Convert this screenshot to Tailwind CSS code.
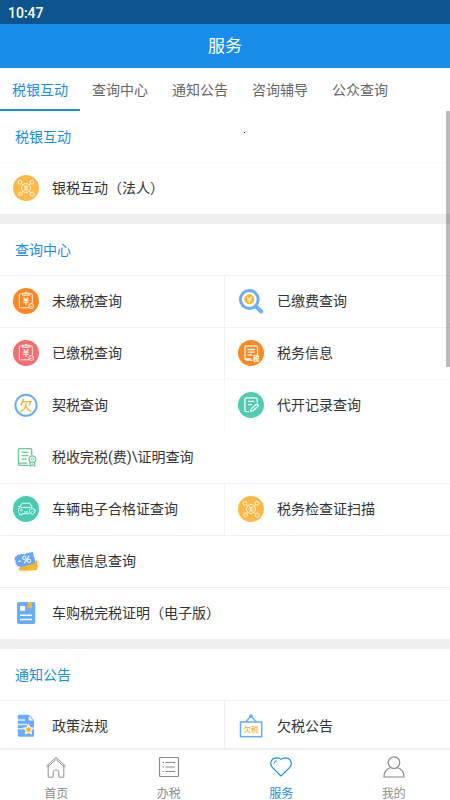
<!DOCTYPE html>
<html lang="zh-CN">
<head>
<meta charset="utf-8">
<meta name="viewport" content="width=device-width, initial-scale=1">
<title>服务</title>
<script src="https://cdn.jsdelivr.net/npm/@tailwindcss/browser@4"></script>
</head>
<body class="w-[450px] h-[800px] overflow-hidden bg-white font-['Roboto','Noto_Sans_CJK_SC',sans-serif] text-[14px] leading-[20px] text-[#333]">
<svg class="hidden">
  <symbol id="network" viewBox="0 0 26 26">
    <circle cx="13" cy="13" r="13" fill="#fdb948"/>
    <g fill="none" stroke="#fff3da" stroke-width="1">
      <circle cx="13" cy="13" r="4.5"/><circle cx="7" cy="7.2" r="1.9"/><circle cx="19" cy="7.2" r="1.9"/><circle cx="7.4" cy="18.9" r="1.7"/><circle cx="19.2" cy="19.2" r="2"/>
      <path d="M8.3 8.5l1.7 1.6M17.7 8.5L16 10.1M8.8 17.6l1.3-1.4M17.6 17.7L16 16.1M11 11.3h4M11.3 13h3.4M13 11v4.2M11.2 15h3.6"/>
    </g>
  </symbol>
  <symbol id="clip" viewBox="0 0 26 26">
    <g fill="none" stroke="#fff0e6" stroke-width="1">
      <path d="M16 19.8H7.4Q6.3 19.8 6.3 18.7V6.9Q6.3 5.8 7.4 5.8H18.2Q19.3 5.8 19.3 6.9V15"/>
      <path d="M9.5 7.3V5.2h2Q13 2.8 14.6 5.2h2v2.1z"/>
      <path d="M10.6 9.3L13 12l2.4-2.7M10.3 12.2h5.4M10.3 14.4h5.4M13 12v5" stroke-width="1.2"/>
      <circle cx="18.2" cy="18" r="2.4"/><path d="M17 18l1 .9 1.5-1.7" stroke-width=".8"/>
    </g>
  </symbol>
</svg>

<div class="flex h-full flex-col">
  <div class="h-6 shrink-0 bg-[#0e548d] pl-2 pt-[3px] text-[14px] font-medium text-white">10:47</div>
  <header class="flex h-11 shrink-0 items-center justify-center bg-[#188dea] text-[17px] text-white">服务</header>
  <nav class="flex h-[43px] shrink-0 text-[14px] text-[#666]">
    <a class="flex w-20 items-center justify-center border-b-2 border-[#188dea] pt-[2px] text-[#188dea]">税银互动</a>
    <a class="flex w-20 items-center justify-center">查询中心</a>
    <a class="flex w-20 items-center justify-center">通知公告</a>
    <a class="flex w-20 items-center justify-center">咨询辅导</a>
    <a class="flex w-20 items-center justify-center">公众查询</a>
  </nav>

  <main class="relative min-h-0 flex-1 overflow-hidden">
    <div class="absolute right-0 top-0 h-64 w-1 bg-black/27"></div>
    <div class="absolute left-[244px] top-[21px] size-px bg-black"></div>

    <section>
      <h2 class="flex h-[51px] items-center pl-[15px] text-[#188dea]">税银互动</h2>
      <div class="flex h-[52px] items-center gap-[13px] border-t border-[#fafafa] pb-[2px] pl-[13px]">
        <svg class="size-[26px]"><use href="#network"/></svg>银税互动（法人）
      </div>
    </section>
    <div class="h-[10px] bg-[#efefef]"></div>

    <section>
      <h2 class="flex h-[51px] items-center pl-[15px] text-[#188dea]">查询中心</h2>
      <div class="grid grid-cols-2">
        <div class="flex h-[52px] items-center gap-[13px] border-t border-r border-[#f1f1f1] pb-[2px] pl-[13px]">
          <svg class="size-[26px]" viewBox="0 0 26 26"><circle cx="13" cy="13" r="13" fill="#fd8721"/><use href="#clip"/></svg>未缴税查询
        </div>
        <div class="flex h-[52px] items-center gap-[13px] border-t border-[#f1f1f1] pb-[2px] pl-[13px]">
          <svg class="size-[26px]" viewBox="0 0 26 26" fill="none"><path d="M18 18.5l5.2 5" stroke="#6db0f8" stroke-width="4" stroke-linecap="round"/><circle cx="11.3" cy="11.5" r="8.9" stroke="#68adf7" stroke-width="3"/><circle cx="11.3" cy="11.2" r="5" fill="#f9b532"/><path d="M9.2 9l2.1 2.4L13.4 9M9 12h4.6M11.3 11v4" stroke="#fff3c8" stroke-width="1.2"/></svg>已缴费查询
        </div>
        <div class="flex h-[52px] items-center gap-[13px] border-t border-r border-[#f1f1f1] pb-[2px] pl-[13px]">
          <svg class="size-[26px]" viewBox="0 0 26 26"><circle cx="13" cy="13" r="13" fill="#f26c70"/><use href="#clip"/></svg>已缴税查询
        </div>
        <div class="flex h-[52px] items-center gap-[13px] border-t border-[#f1f1f1] pb-[2px] pl-[13px]">
          <svg class="size-[26px]" viewBox="0 0 26 26" fill="none" stroke="#fff4e8"><circle cx="13" cy="13" r="13" fill="#fd8721" stroke="none"/><path d="M14.5 20.2H9Q7 20.2 7 18.2V7Q7 6 8 6h10.5q1 0 1 1v8M7 18.8h6" stroke-width="1.3"/><path d="M9.5 9.5h7.5M9.5 12.2h7.5M9.5 15h4.5" stroke-width="1.3"/><text x="15" y="20.8" font-size="6.5" font-weight="700" fill="#fff" stroke="none" font-family="Noto Sans CJK SC">税</text></svg>税务信息
        </div>
        <div class="flex h-[52px] items-center gap-[13px] border-t border-r border-[#f8f8f8] pb-[2px] pl-[13px]">
          <svg class="size-[26px]" viewBox="0 0 26 26"><circle cx="13" cy="13.3" r="10.6" fill="none" stroke="#65abf8" stroke-width="1.9"/><text x="13" y="18" font-size="13" font-weight="500" text-anchor="middle" fill="#f8b02b" font-family="Noto Sans CJK SC">欠</text></svg>契税查询
        </div>
        <div class="flex h-[52px] items-center gap-[13px] border-t border-[#f8f8f8] pb-[2px] pl-[13px]">
          <svg class="size-[26px]" viewBox="0 0 26 26" fill="none" stroke="#f2fffb" stroke-width="1.3" stroke-linejoin="round"><circle cx="13" cy="13" r="13" fill="#4fccb1" stroke="none"/><path d="M11 19.7H8.2q-1.3 0-1.3-1.3V7.1q0-1.3 1.3-1.3h9.6q1.4 0 1.4 1.4v3.4M10 9.4h6.2M10 12.6h4"/><path d="M12.7 19.3l.5-2.6 5-4.2q1.1-.6 1.8.4t-.2 1.7l-4.7 4z"/></svg>代开记录查询
        </div>
        <div class="col-span-2 flex h-[52px] items-center gap-[13px] border-t border-[#fdfdfd] pb-[2px] pl-[13px]">
          <svg class="size-[26px]" viewBox="0 0 26 26" fill="none" stroke="#67c99a" stroke-width="1.3"><path d="M15.5 21.3H7q-1.5 0-1.5-1.4V5.8q0-1.2 1.2-1.2h10.8q1.2 0 1.2 1.2V11M5.6 19.2h8.5M8.5 8.3h7M8.5 11.7h7M8.5 15.1h5"/><circle cx="19.4" cy="15.2" r="3.3"/><circle cx="19.4" cy="15.2" r="1.2" stroke-width=".8"/><path d="M17.2 18v4l2.2-1.1 2.2 1.1v-4"/></svg>税收完税(费)\证明查询
        </div>
        <div class="flex h-[52px] items-center gap-[13px] border-t border-r border-[#f3f3f3] pb-[2px] pl-[13px]">
          <svg class="size-[26px]" viewBox="0 0 26 26" fill="none" stroke="#e4fff7"><circle cx="13" cy="13" r="13" fill="#48cbae" stroke="none"/><path d="M16.2 17.7H9v1H6.5v-1.4q-1-.5-1-1.7v-2q0-1.5 1.5-2L8.5 8q.3-.8 1.2-.8h6.6q.9 0 1.2.8l1.2 3.6M8 11.5h9.5M11 16h4M5 10.4l2 .5M19.5 10.4l-1.5.5"/><circle cx="8.5" cy="14" r=".8"/><path d="M19.3 12.6l2.8 1v1.7q0 2-2.8 3.2-2.8-1.2-2.8-3.2v-1.7z"/><path d="M18 15.5l1 .9 1.7-1.8" stroke-width=".8"/></svg>车辆电子合格证查询
        </div>
        <div class="flex h-[52px] items-center gap-[13px] border-t border-[#f3f3f3] pb-[2px] pl-[13px]">
          <svg class="size-[26px]"><use href="#network"/></svg>税务检查证扫描
        </div>
        <div class="col-span-2 flex h-[52px] items-center gap-[13px] border-t border-[#f0f0f0] pb-[2px] pl-[13px]">
          <svg class="size-[26px]" viewBox="0 0 26 26"><path d="M6 19.5l16-5.2 1.3-2.2q2.3 1.4.8 3.3.3 1.6.8 2.3l-1.1 4.3q-9 1.3-17.8.4z" fill="#f9b62d"/><path d="M4.3 6.8l6.4-.8q1.3 1.1 2.2-.6l7-1.3.7 2.6q-.8 1.3.6 2.2l1.3 4.5q-1.5.8-.9 2L7.4 19.2q-1-1.6-2.8-.6l-2.4-4.2q1.3-1.7-.7-2.4L2 8.8q1.9-.2 2.3-2z" fill="#63a6fa"/><path d="M5.2 13.5l2.8-.5M16.1 7.5l-4.8 8" stroke="#fff" stroke-width="1.2"/><g fill="none" stroke="#fff" stroke-width="1"><circle cx="11.2" cy="9.9" r="1.7"/><circle cx="16" cy="12.8" r="1.7"/></g></svg>优惠信息查询
        </div>
        <div class="col-span-2 flex h-[52px] items-center gap-[13px] border-t border-[#ededed] pb-[2px] pl-[13px]">
          <svg class="size-[26px]" viewBox="0 0 26 26"><rect x="4" y="2" width="18.3" height="22" rx="2" fill="#67adf9"/><path d="M14.5 2H19v7l-2.2-1.6L14.5 9z" fill="#f4b33a"/><path d="M7 6h5v4.8H7z" fill="#fff"/><path d="M7 15.3h12M7 19.5h12" stroke="#f4faff" stroke-width="1.5"/></svg>车购税完税证明（电子版）
        </div>
      </div>
    </section>
    <div class="h-[10px] bg-[#efefef]"></div>

    <section>
      <h2 class="flex h-[51px] items-center pl-[15px] text-[#188dea]">通知公告</h2>
      <div class="grid grid-cols-2">
        <div class="flex h-[52px] items-center gap-[13px] border-t border-r border-[#efefef] pb-[2px] pl-[13px]">
          <svg class="size-[26px]" viewBox="0 0 26 26"><path d="M6 1.8h10l5 5.4v15.3q0 1.3-1.3 1.3H6q-1.2 0-1.2-1.3V3q0-1.2 1.2-1.2z" fill="#69acfa"/><path d="M15.7 2.7v4.7h4.7z" fill="#e4f3ff"/><path d="M5 7h7M5 11.5h9.5M5 15.7h6" stroke="#dceeff" stroke-width="1.3"/><path d="M15.5 11.7l1.5 3 3.2.4-2.4 2.3.6 3.2-2.9-1.5-2.9 1.5.6-3.2-2.4-2.3 3.2-.4z" fill="#f9ac18" stroke="#fff6db" stroke-width="1.4" stroke-linejoin="round"/></svg>政策法规
        </div>
        <div class="flex h-[52px] items-center gap-[13px] border-t border-[#efefef] pb-[2px] pl-[13px]">
          <svg class="size-[26px]" viewBox="0 0 26 26"><path d="M7.5 9L13 3l5.5 6" fill="none" stroke="#69aff8" stroke-width="1.4"/><circle cx="13" cy="3.2" r="1.9" fill="#64b2f2"/><rect x="2.5" y="9" width="21.2" height="14.7" fill="#fff" stroke="#69aaf8" stroke-width="1.5"/><text x="13" y="19" font-size="7.3" font-weight="500" text-anchor="middle" fill="#f5ae2c" font-family="Noto Sans CJK SC">欠税</text></svg>欠税公告
        </div>
      </div>
    </section>
  </main>

  <footer class="grid h-[52px] shrink-0 grid-cols-4 border-t-2 border-[#f0f0f0] bg-white text-[12px] leading-[16px] text-[#8a8a8a]">
    <div class="flex flex-col items-center gap-2 pt-[6px]">
      <svg class="size-[22px]" viewBox="0 0 22 22" fill="none" stroke="currentColor"><path d="M1.3 10.1L11 1.3l9.7 8.8M3.2 9.2v12h5v-5.5q0-1.8 2.8-1.8t2.8 1.8v5.5h5v-12M2.6 11L11 3.4l8.4 7.6" stroke-width=".95"/></svg>首页
    </div>
    <div class="flex flex-col items-center gap-2 pt-[6px]">
      <svg class="size-[22px]" viewBox="0 0 22 22" fill="none" stroke="currentColor" stroke-width="1.2"><rect x="1.5" y="1.5" width="19" height="19" rx=".8"/><path d="M7.5 6.5h9.5M7.5 11h9.5M7.5 15.5h9.5M4.5 6.5H6M4.5 11H6M4.5 15.5H6"/></svg>办税
    </div>
    <div class="flex flex-col items-center gap-2 pt-[6px] text-[#188dea]">
      <svg class="size-[22px]" viewBox="0 0 22 22" fill="none" stroke="currentColor" stroke-width="1.2"><path d="M11 20L2.5 11.7Q.5 9.2.8 6.8 1.5 2 6.4 1.8 9 1.8 11 3.4q2-1.6 4.6-1.6 4.9.2 5.6 5 .3 2.4-1.7 4.9z"/><path d="M4 7.5Q4.5 5 6.8 4.8" stroke-width="1"/></svg>服务
    </div>
    <div class="flex flex-col items-center gap-2 pt-[6px]">
      <svg class="size-[22px]" viewBox="0 0 22 22" fill="none" stroke="currentColor" stroke-width="1.2"><circle cx="11" cy="6.6" r="5.8"/><path d="M7.8 11.5Q1 13.6 1 21h20q0-7.4-6.8-9.5"/></svg>我的
    </div>
  </footer>
</div>
</body>
</html>
